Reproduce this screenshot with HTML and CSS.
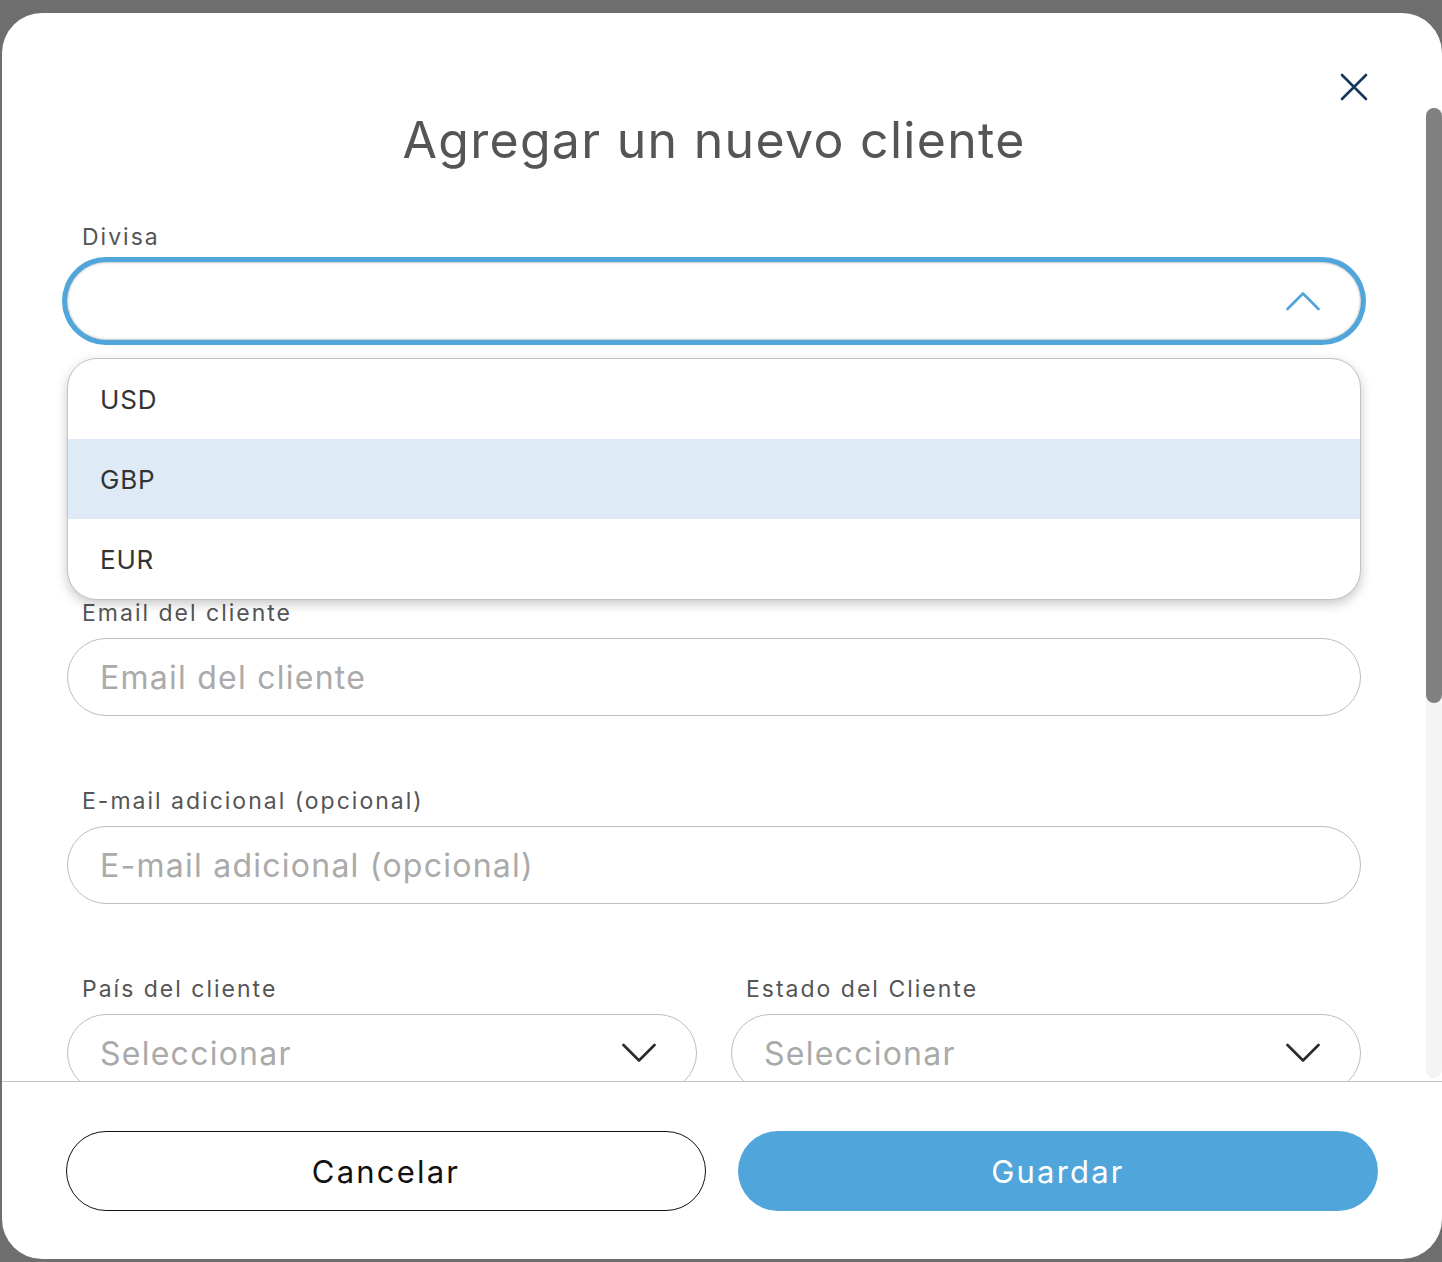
FILE: index.html
```html
<!DOCTYPE html>
<html lang="es">
<head>
<meta charset="utf-8">
<title>Agregar un nuevo cliente</title>
<link rel="stylesheet" href="styles.css">
</head>
<body>
<div class="modal">
  <div class="modal-body">
    <div class="header">
      <button class="close" aria-label="Cerrar">
        <svg width="28" height="28" viewBox="0 0 28 28"><path d="M2 2L26 26M26 2L2 26" stroke="#17365a" stroke-width="2.6" stroke-linecap="round" fill="none"/></svg>
      </button>
      <h1 class="title">Agregar un nuevo cliente</h1>
    </div>
    <div class="form">
      <div class="field field-divisa">
        <div class="label">Divisa</div>
        <div class="control control-focus">
          <span class="value"></span>
          <svg class="chev" width="34" height="20" viewBox="0 0 34 20"><path d="M1.5 18L17 2.5L32.5 18" stroke="#50a5da" stroke-width="2.6" stroke-linecap="round" stroke-linejoin="round" fill="none"/></svg>
        </div>
        <div class="dropdown">
          <div class="option">USD</div>
          <div class="option option-active">GBP</div>
          <div class="option">EUR</div>
        </div>
      </div>
      <div class="field field-hidden" aria-hidden="true">
        <div class="label">&nbsp;</div>
        <div class="control"></div>
      </div>
      <div class="field">
        <div class="label">Email del cliente</div>
        <div class="control"><span class="placeholder">Email del cliente</span></div>
      </div>
      <div class="field">
        <div class="label">E-mail adicional (opcional)</div>
        <div class="control"><span class="placeholder">E-mail adicional (opcional)</span></div>
      </div>
      <div class="row">
        <div class="field">
          <div class="label">País del cliente</div>
          <div class="control">
            <span class="placeholder">Seleccionar</span>
            <svg class="chev" width="34" height="20" viewBox="0 0 34 20"><path d="M1.5 2L17 17.5L32.5 2" stroke="#2b2b2b" stroke-width="2.6" stroke-linecap="round" stroke-linejoin="round" fill="none"/></svg>
          </div>
        </div>
        <div class="field">
          <div class="label">Estado del Cliente</div>
          <div class="control">
            <span class="placeholder">Seleccionar</span>
            <svg class="chev" width="34" height="20" viewBox="0 0 34 20"><path d="M1.5 2L17 17.5L32.5 2" stroke="#2b2b2b" stroke-width="2.6" stroke-linecap="round" stroke-linejoin="round" fill="none"/></svg>
          </div>
        </div>
      </div>
    </div>
  </div>
  <div class="scrollbar"><div class="thumb"></div></div>
  <div class="footer">
    <button class="btn btn-outline">Cancelar</button>
    <button class="btn btn-primary">Guardar</button>
  </div>
</div>
</body>
</html>
```
FILE: styles.css
```css
* { box-sizing: border-box; }
body {
  margin: 0;
  background: #6e6e6e;
  font-family: Inter, "Open Sans", sans-serif;
  height: 1262px;
  overflow: hidden;
}
.modal {
  position: relative;
  margin: 13px 0 0 2px;
  width: 1440px;
  height: 1246px;
  background: #fff;
  border-radius: 40px;
  overflow: hidden;
  display: flex;
  flex-direction: column;
}
.modal-body {
  height: 1068px;
  flex: none;
  overflow: hidden;
  padding: 0 81px 0 65px;
}
.header {
  display: flex;
  flex-direction: column;
  padding-top: 60px;
}
.close {
  align-self: flex-end;
  margin-right: -7px;
  width: 28px;
  height: 28px;
  padding: 0;
  border: 0;
  background: none;
  display: flex;
}
.title {
  margin: 9px 0 0;
  font-size: 50px;
  line-height: 60px;
  font-weight: 400;
  letter-spacing: 1.3px;
  color: #555;
  text-align: center;
}
.form {
  margin-top: 52px;
  display: flex;
  flex-direction: column;
  gap: 70px;
}
.field {
  position: relative;
  display: flex;
  flex-direction: column;
  gap: 10px;
}
.field-hidden { visibility: hidden; }
.label {
  padding-left: 15px;
  font-size: 23px;
  line-height: 30px;
  color: #555;
  letter-spacing: 2px;
}
.control {
  height: 78px;
  border: 1.5px solid #bdbdbd;
  border-radius: 40px;
  padding: 0 40px 0 32px;
  display: flex;
  align-items: center;
  justify-content: space-between;
  background: #fff;
}
.control-focus {
  border-color: #d4d4d4;
  box-shadow: 0 0 0 5px #50a5da, inset 0 0 3px rgba(0,0,0,0.12);
}
.placeholder {
  font-size: 32px;
  letter-spacing: 1.25px;
  color: #aaa;
}
.chev { flex: none; }
.row {
  display: grid;
  grid-template-columns: 1fr 1fr;
  gap: 34px;
}
.dropdown {
  position: absolute;
  left: 0;
  right: 0;
  top: 136px;
  z-index: 2;
  background: #fff;
  border: 1.5px solid #c2c2c2;
  border-radius: 30px;
  overflow: hidden;
  box-shadow: 0 4px 12px rgba(0,0,0,0.22);
}
.option {
  height: 80px;
  display: flex;
  align-items: center;
  padding-left: 32px;
  font-size: 26px;
  letter-spacing: 0.8px;
  color: #333;
}
.option-active { background: #deebf6; }
.scrollbar {
  position: absolute;
  right: 0;
  top: 95px;
  width: 16px;
  height: 970px;
  background: #f4f4f4;
  border-radius: 8px;
}
.thumb {
  height: 595px;
  background: #808080;
  border-radius: 8px;
}
.footer {
  flex: 1;
  border-top: 1.5px solid #c4c4c4;
  padding: 49px 64px 0;
  display: grid;
  grid-template-columns: 1fr 1fr;
  gap: 32px;
  align-content: start;
}
.btn {
  height: 80px;
  border-radius: 40px;
  font-family: inherit;
  font-size: 31px;
  letter-spacing: 2.2px;
  cursor: pointer;
}
.btn-outline {
  background: #fff;
  border: 1.5px solid #111;
  color: #111;
}
.btn-primary {
  background: #50a5da;
  border: 0;
  color: #fff;
}
```
